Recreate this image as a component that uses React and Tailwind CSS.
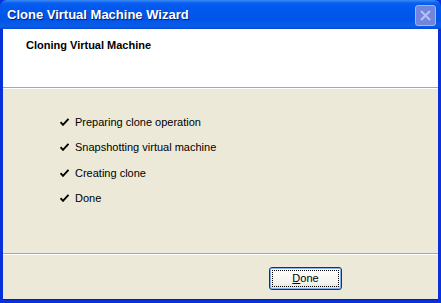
import React from "react";

const steps = [
  "Preparing clone operation",
  "Snapshotting virtual machine",
  "Creating clone",
  "Done",
];

const Check = () => (
  <svg width="9" height="8" viewBox="0 0 9 8" className="shrink-0">
    <path d="M0.5 4.2 L3 6.8 L8.5 0.8" fill="none" stroke="#000" strokeWidth="1.9" />
  </svg>
);

const CloseButton = () => (
  <div className="absolute right-[5px] top-[5px] w-[21px] h-[21px] rounded-[3px] border border-[#a9b4ec] bg-[#7285dc] flex items-center justify-center">
    <svg width="11" height="11" viewBox="0 0 11 11">
      <path d="M1 1 L10 10 M10 1 L1 10" stroke="#b9c1ee" strokeWidth="2" />
    </svg>
  </div>
);

export default function App() {
  return (
    <div
      className="w-[441px] h-[303px] flex flex-col bg-[#0831d9] overflow-hidden"
      style={{ fontFamily: '"Liberation Sans", Arial, sans-serif' }}
    >
      <div className="relative h-[29px] shrink-0 rounded-t-[7px] bg-[linear-gradient(to_bottom,#3b8cf5_0px,#0a5ff0_3px,#0058ee_8px,#0055e8_20px,#0a5fe8_26px,#0848d8_29px)] flex items-center pl-[7px]">
        <span className="text-white font-bold text-[13px] [text-shadow:1px_1px_0_#0a1e7a]">
          Clone Virtual Machine Wizard
        </span>
        <CloseButton />
      </div>
      <div className="flex-1 flex flex-col mx-[3px] mb-[3px] border-b border-[#0019cf]">
        <div className="h-[58px] bg-white pl-[23px] pt-[9px] text-[11px] leading-[14px]">
          <span className="font-bold text-black">Cloning Virtual Machine</span>
        </div>
        <div className="h-px bg-[#aca899]" />
        <div className="h-px bg-white" />
        <div className="flex-1 bg-[#ece9d8] pt-[20px] pl-[57px]">
          {steps.map((s) => (
            <div key={s} className="h-[25.5px] flex items-center gap-[6px]">
              <Check />
              <span className="text-[11px] text-black">{s}</span>
            </div>
          ))}
        </div>
        <div className="h-px bg-[#aca899]" />
        <div className="h-px bg-white" />
        <div className="h-[44px] bg-[#ece9d8] flex justify-end items-start pt-[12px] pr-[96px]">
          <button className="w-[73px] h-[23px] rounded-[3px] border border-[#003c74] bg-[linear-gradient(to_bottom,#ffffff,#f4f3ee_70%,#e3e1d8)] p-[2px] shadow-[inset_0_0_0_1px_#89adef]">
            <div className="w-full h-full border border-dotted border-black flex items-center justify-center text-[11px] text-black">
              <span>
                <span className="underline">D</span>one
              </span>
            </div>
          </button>
        </div>
      </div>
    </div>
  );
}
